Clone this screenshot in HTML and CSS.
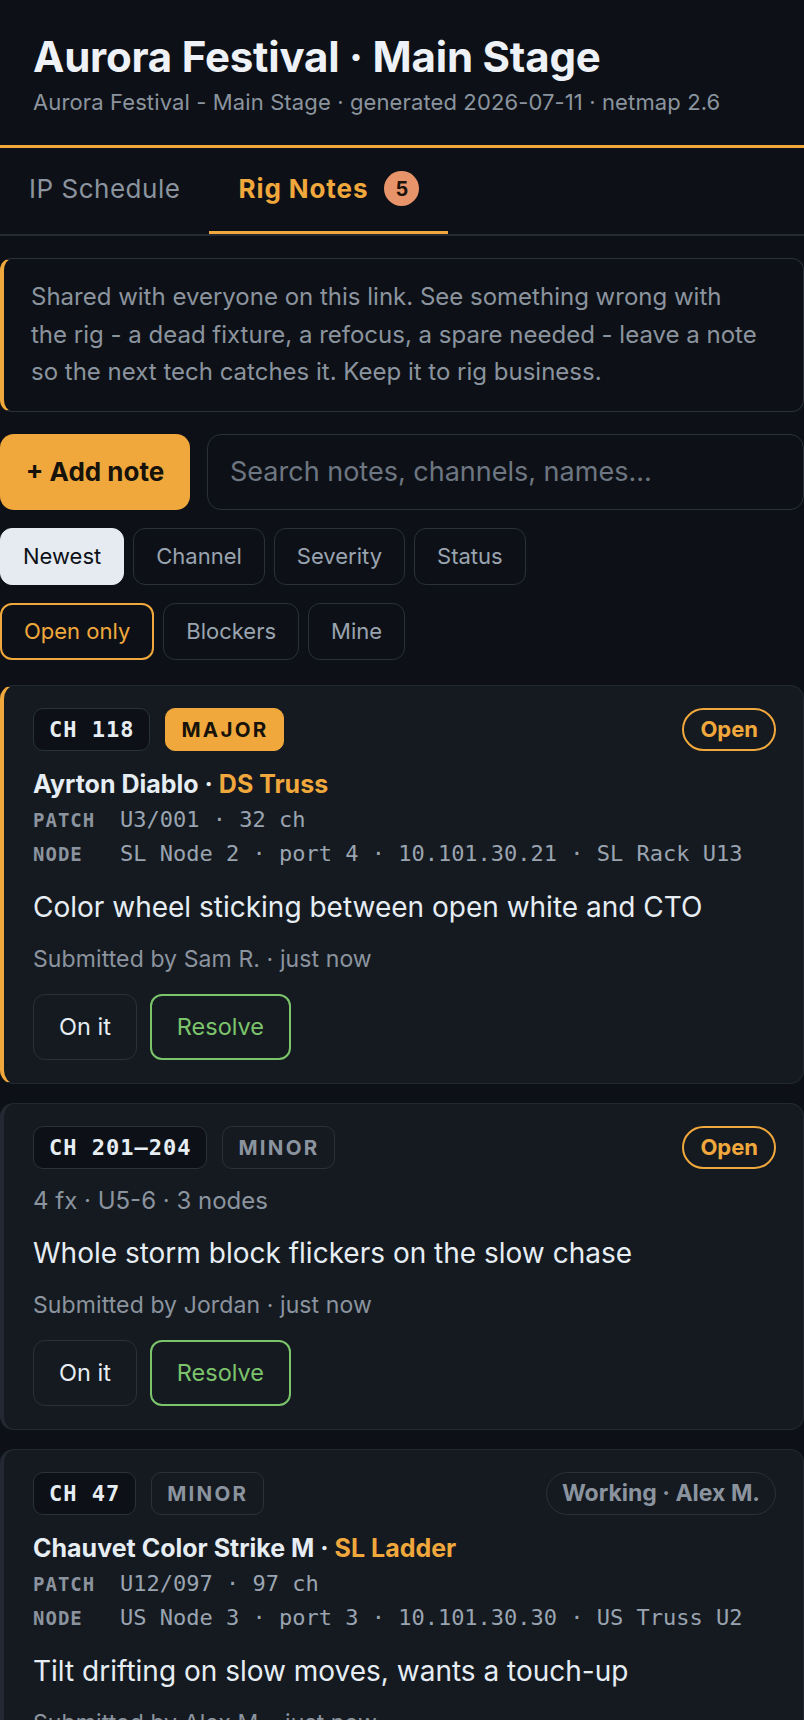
FILE: index.html
```html
<!DOCTYPE html>
<html lang="en">
<head>
  <meta charset="UTF-8" />
  <meta name="viewport" content="width=device-width, initial-scale=1.0"/>
  <title>Aurora Festival · Main Stage</title>
  <link rel="stylesheet" href="styles.css">
</head>
<body>
  <header class="top">
    <h1>Aurora Festival · Main Stage</h1>
    <p class="sub">Aurora Festival - Main Stage · generated 2026-07-11 · netmap 2.6</p>
  </header>

  <nav class="tabs">
    <a class="tab">IP Schedule</a>
    <a class="tab active">Rig Notes <span class="count">5</span></a>
  </nav>

  <div class="notice">
    Shared with everyone on this link. See something wrong with<br>
    the rig - a dead fixture, a refocus, a spare needed - leave a note so the next tech catches it. Keep it to rig business.
  </div>

  <div class="actions">
    <button class="add-btn">+ Add note</button>
    <input class="search" type="text" placeholder="Search notes, channels, names..." />
  </div>

  <div class="chips">
    <button class="chip selected">Newest</button>
    <button class="chip">Channel</button>
    <button class="chip">Severity</button>
    <button class="chip">Status</button>
  </div>
  <div class="chips">
    <button class="chip on">Open only</button>
    <button class="chip">Blockers</button>
    <button class="chip">Mine</button>
  </div>

  <div class="notes">
    <div class="note major">
      <div class="note-head">
        <span class="ch">CH 118</span>
        <span class="sev sev-major">MAJOR</span>
        <span class="status open">Open</span>
      </div>
      <div class="fixture">Ayrton Diablo · <span class="pos">DS Truss</span></div>
      <div class="meta">
        <span class="lbl">PATCH</span><span>U3/001 · 32 ch</span>
        <span class="lbl">NODE</span><span>SL Node 2 · port 4 · 10.101.30.21 · SL Rack U13</span>
      </div>
      <p class="text">Color wheel sticking between open white and CTO</p>
      <p class="by">Submitted by Sam R. · just now</p>
      <div class="btns">
        <button class="btn">On it</button>
        <button class="btn resolve">Resolve</button>
      </div>
    </div>

    <div class="note">
      <div class="note-head">
        <span class="ch">CH 201–204</span>
        <span class="sev">MINOR</span>
        <span class="status open">Open</span>
      </div>
      <div class="group">4 fx · U5-6 · 3 nodes</div>
      <p class="text">Whole storm block flickers on the slow chase</p>
      <p class="by">Submitted by Jordan · just now</p>
      <div class="btns">
        <button class="btn">On it</button>
        <button class="btn resolve">Resolve</button>
      </div>
    </div>

    <div class="note">
      <div class="note-head">
        <span class="ch">CH 47</span>
        <span class="sev">MINOR</span>
        <span class="status working">Working · Alex M.</span>
      </div>
      <div class="fixture">Chauvet Color Strike M · <span class="pos">SL Ladder</span></div>
      <div class="meta">
        <span class="lbl">PATCH</span><span>U12/097 · 97 ch</span>
        <span class="lbl">NODE</span><span>US Node 3 · port 3 · 10.101.30.30 · US Truss U2</span>
      </div>
      <p class="text">Tilt drifting on slow moves, wants a touch-up</p>
      <p class="by">Submitted by Alex M. · just now</p>
      <div class="btns">
        <button class="btn">On it</button>
        <button class="btn resolve">Resolve</button>
      </div>
    </div>
  </div>
</body>
</html>
```

FILE: styles.css
```css
:root {
  --bg: #0d1117;
  --card: #151a21;
  --line: #2a313b;
  --text: #e6edf3;
  --muted: #8b949e;
  --orange: #f0a83c;
  --green: #7cc46b;
}

* {
  box-sizing: border-box;
}

body {
  margin: 0;
  background: var(--bg);
  color: var(--text);
  font-family: Inter, "Noto Sans", sans-serif;
}

.top {
  padding: 32px 33px 28px;
  border-bottom: 3px solid var(--orange);
}

.top h1 {
  margin: 0;
  font-size: 42px;
  line-height: 50px;
  font-weight: 700;
  letter-spacing: -0.005em;
  color: #eef2f6;
}

.sub {
  margin: 5px 0 0;
  font-size: 22px;
  line-height: 30px;
  letter-spacing: 0.12px;
  color: var(--muted);
}

.tabs {
  display: flex;
  border-bottom: 2px solid #252b34;
}

.tab {
  display: flex;
  align-items: center;
  gap: 16px;
  padding: 23px 29px 25px;
  font-size: 26px;
  line-height: 34px;
  color: var(--muted);
  letter-spacing: 0.02em;
  border-bottom: 3px solid transparent;
}

.tab.active {
  color: var(--orange);
  font-weight: 700;
  border-bottom-color: var(--orange);
  letter-spacing: 0.035em;
}

.count {
  display: inline-flex;
  align-items: center;
  justify-content: center;
  width: 35px;
  height: 35px;
  border-radius: 50%;
  background: #e8946a;
  color: #1b130c;
  font-size: 20px;
  letter-spacing: 0;
}

.notice {
  margin-top: 22px;
  padding: 19px 18px 20px 27px;
  border: 1.5px solid var(--line);
  border-left: 4px solid var(--orange);
  border-radius: 12px;
  font-size: 24px;
  line-height: 37.5px;
  color: var(--muted);
}

.actions {
  display: flex;
  gap: 17px;
  margin-top: 22px;
  height: 76px;
}

.add-btn {
  width: 190px;
  border: none;
  border-radius: 14px;
  background: var(--orange);
  color: #17120a;
  font-family: inherit;
  font-size: 26px;
  font-weight: 700;
}

.search {
  flex: 1;
  min-width: 0;
  padding: 0 22px;
  border: 1.5px solid var(--line);
  border-radius: 14px;
  background: var(--bg);
  color: var(--text);
  font-family: inherit;
  font-size: 27px;
}

.search::placeholder {
  color: #6e7681;
}

.chips {
  display: flex;
  gap: 9px;
  margin-top: 18px;
}

.chip {
  height: 57px;
  padding: 0 22px;
  border: 1.5px solid var(--line);
  border-radius: 12px;
  background: var(--bg);
  color: #9aa4b0;
  font-family: inherit;
  font-size: 22px;
}

.chip.selected {
  background: #e6ebf1;
  border-color: #e6ebf1;
  color: #0d1117;
}

.chip.on {
  border: 2px solid var(--orange);
  color: var(--orange);
}

.notes {
  display: flex;
  flex-direction: column;
  gap: 19px;
  margin-top: 25px;
}

.note {
  padding: 22px 27px 23px 29px;
  background: var(--card);
  border: 1.5px solid #232932;
  border-left: 4px solid #232932;
  border-radius: 14px;
}

.note.major {
  border-left-color: var(--orange);
}

.note-head {
  display: flex;
  align-items: center;
  gap: 15px;
  height: 43px;
}

.ch {
  height: 43px;
  display: flex;
  align-items: center;
  padding: 0 15px;
  background: var(--bg);
  border: 1.5px solid var(--line);
  border-radius: 10px;
  font-family: "DejaVu Sans Mono", monospace;
  font-size: 22px;
  font-weight: 700;
  letter-spacing: 1px;
}

.sev {
  height: 43px;
  display: flex;
  align-items: center;
  padding: 0 15px;
  border: 1.5px solid var(--line);
  border-radius: 10px;
  color: var(--muted);
  font-size: 20.5px;
  font-weight: 700;
  letter-spacing: 0.11em;
}

.sev-major {
  background: var(--orange);
  border-color: var(--orange);
  color: #17120a;
}

.status {
  margin-left: auto;
  height: 43px;
  display: flex;
  align-items: center;
  padding: 0 16px;
  border-radius: 22px;
  font-size: 22px;
  font-weight: 700;
}

.status.open {
  border: 2px solid var(--orange);
  color: var(--orange);
}

.status.working {
  padding: 0 15px;
  border: 1.5px solid var(--line);
  color: var(--muted);
  font-size: 23px;
}

.fixture {
  margin-top: 18px;
  font-size: 25px;
  line-height: 30px;
  font-weight: 700;
}

.pos {
  color: var(--orange);
}

.group {
  margin-top: 17px;
  font-size: 24px;
  line-height: 30px;
  color: var(--muted);
}

.meta {
  display: grid;
  grid-template-columns: 87px 1fr;
  margin-top: 4px;
  font-family: "DejaVu Sans Mono", monospace;
  font-size: 22px;
  line-height: 34px;
  color: #9aa4b0;
}

.lbl {
  font-size: 19px;
  font-weight: 700;
  letter-spacing: 1px;
  color: var(--muted);
}

.text {
  margin: 17px 0 0;
  font-size: 28px;
  line-height: 38px;
}

.group + .text {
  margin-top: 18px;
}

.by {
  margin: 18px 0 0;
  font-size: 23px;
  line-height: 30px;
  letter-spacing: 0.1px;
  color: var(--muted);
}

.btns {
  display: flex;
  gap: 13px;
  margin-top: 20px;
}

.btn {
  height: 66px;
  padding: 0 25px;
  border: 1.5px solid var(--line);
  border-radius: 12px;
  background: var(--card);
  color: var(--text);
  font-family: inherit;
  font-size: 23.5px;
}

.btn.resolve {
  border: 2px solid var(--green);
  color: var(--green);
}
```
